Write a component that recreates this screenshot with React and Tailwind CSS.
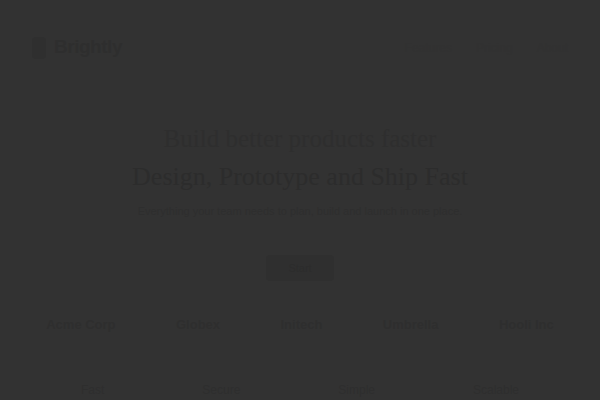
export default function App() {
  return (
    <div className="relative h-[400px] w-[600px] overflow-hidden bg-[#323232] font-['Liberation_Sans',sans-serif] text-[#2e2e2e]">
      {/* Header */}
      <header className="flex h-[95px] items-center justify-between px-8">
        <div className="flex items-center gap-2">
          <div className="h-[22px] w-[14px] rounded-sm bg-[#2f2f2f]" />
          <span className="text-[19px] font-bold tracking-tight">Brightly</span>
        </div>
        <nav className="flex items-center gap-6 text-[12px] text-[#313131]">
          <span>Features</span>
          <span>Pricing</span>
          <span>About</span>
        </nav>
      </header>

      {/* Hero */}
      <section className="flex flex-col items-center pt-[26px] text-center">
        <h1 className="font-['Liberation_Serif',serif] text-[25px] leading-[36px]">Build better products faster</h1>
        <h2 className="font-['Liberation_Serif',serif] text-[26px] leading-[40px] text-[#2c2c2c]">Design, Prototype and Ship Fast</h2>
        <p className="mt-[6px] w-[340px] text-[11px] leading-[16px]">
          Everything your team needs to plan, build and launch in one place.
        </p>
        <button className="mt-[36px] h-[26px] w-[68px] rounded-sm bg-[#2f2f2f] text-[11px] text-[#2c2c2c]">
          Start
        </button>
      </section>

      {/* Logos row */}
      <div className="mt-[34px] flex items-center justify-around px-4 text-[13px] font-bold">
        <span>Acme Corp</span>
        <span>Globex</span>
        <span>Initech</span>
        <span>Umbrella</span>
        <span>Hooli Inc</span>
      </div>

      <div className="mt-[46px] flex justify-around px-8 text-[12px]">
        <span>Fast</span>
        <span>Secure</span>
        <span>Simple</span>
        <span>Scalable</span>
      </div>
    </div>
  );
}
